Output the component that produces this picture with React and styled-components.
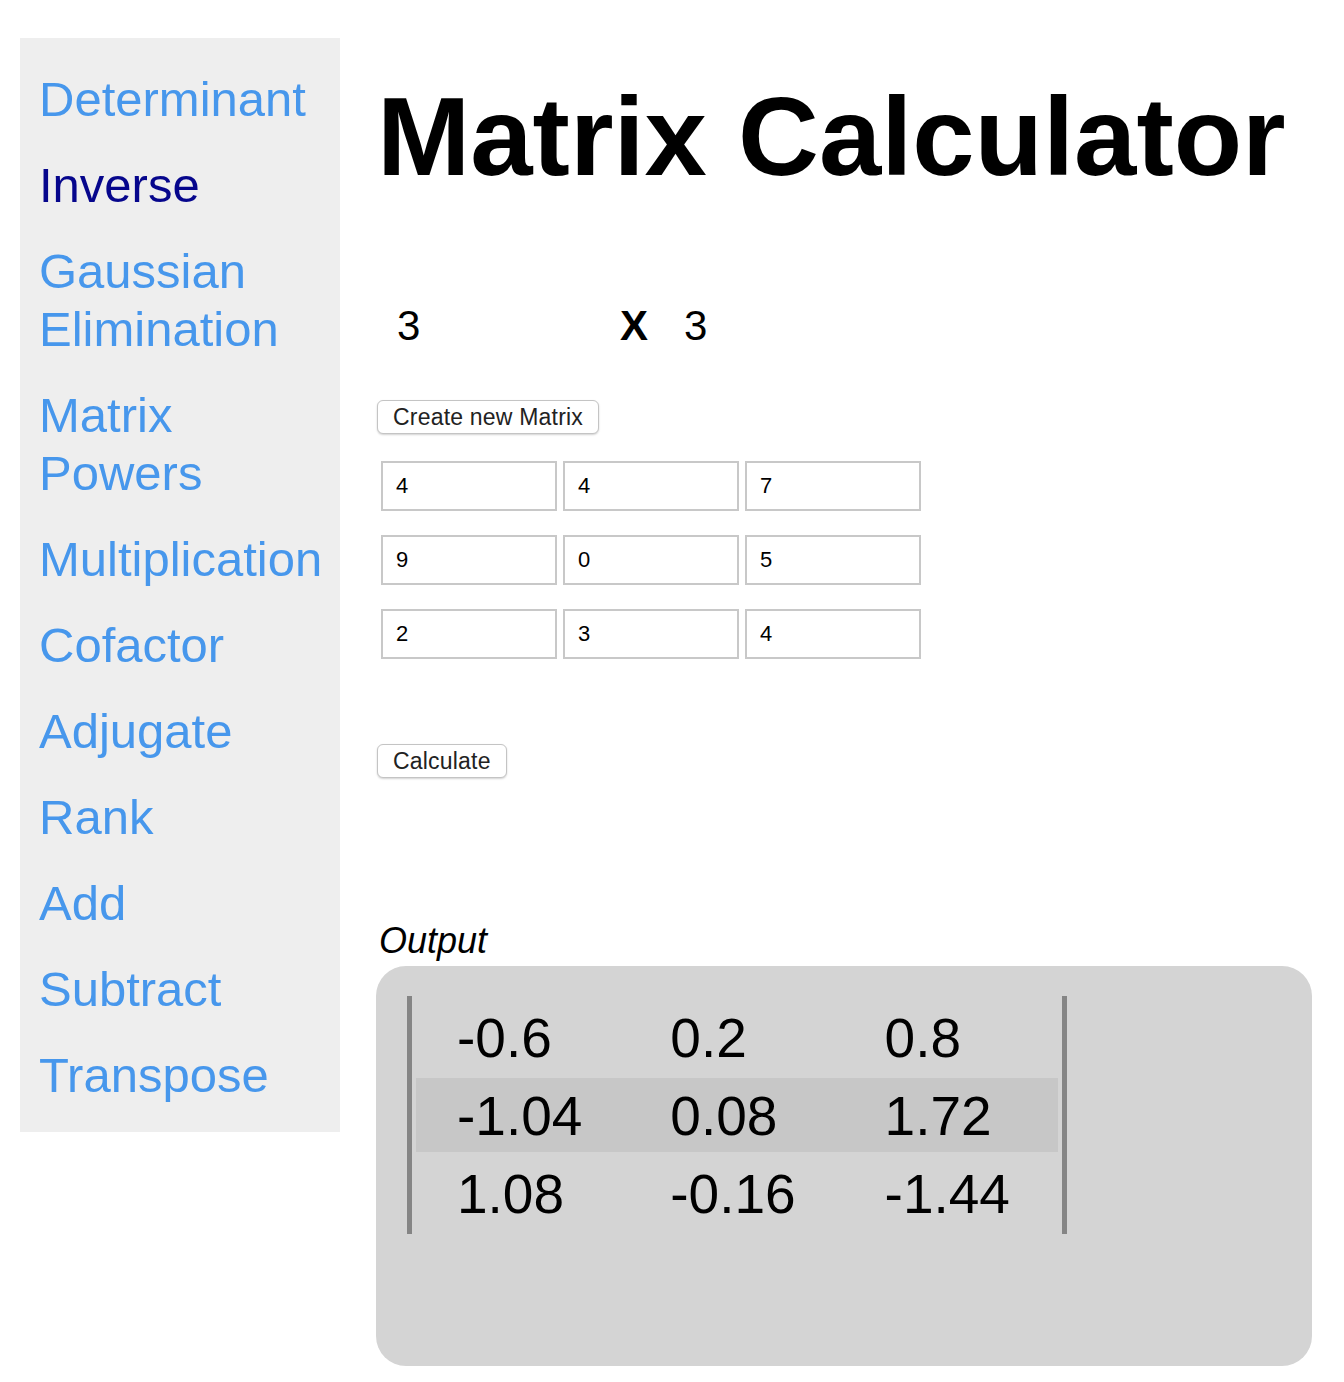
import * as React from 'react';
import styled, { createGlobalStyle } from 'styled-components';

const GlobalStyle = createGlobalStyle`
  body {
    margin: 0;
    background: #fff;
    font-family: "Liberation Sans", Arial, Helvetica, sans-serif;
  }
`;

const Page = styled.div`
  display: flex;
  align-items: flex-start;
  padding: 38px 32px 16px 20px;
`;

const Sidebar = styled.nav`
  width: 320px;
  flex-shrink: 0;
  box-sizing: border-box;
  background: #eeeeee;
  padding: 32px 20px 0 19px;
`;

const NavItem = styled.a`
  display: block;
  font-size: 49px;
  line-height: 58px;
  margin-bottom: 28px;
  color: ${(p) => (p.$visited ? '#06068c' : '#4797ec')};
  text-decoration: none;
  white-space: ${(p) => (p.$nowrap ? 'nowrap' : 'normal')};
`;

const Main = styled.main`
  flex: 1;
  margin-left: 37px;
  display: flex;
  flex-direction: column;
  align-items: flex-start;
`;

const Title = styled.h1`
  margin: 35px 0 0;
  font-size: 112px;
  line-height: 128px;
  font-weight: 700;
  color: #000;
  white-space: nowrap;
`;

const DimRow = styled.div`
  display: flex;
  align-items: center;
  height: 50px;
  margin-top: 100px;
`;

const DimInput = styled.input`
  box-sizing: border-box;
  width: ${(p) => p.$w}px;
  height: 50px;
  padding: 0 0 0 ${(p) => p.$pad}px;
  border: none;
  background: transparent;
  font-family: inherit;
  font-size: 42px;
  color: #000;
  outline: none;
`;

const Times = styled.span`
  margin-left: 21px;
  font-size: 42px;
  font-weight: 700;
  line-height: 50px;
`;

const Button = styled.button`
  box-sizing: border-box;
  height: 34px;
  margin-top: ${(p) => p.$top}px;
  padding: 1px 15px 0;
  border: 1px solid #c4c4c4;
  border-radius: 6px;
  background: #fff;
  box-shadow: 0 1px 2px rgba(0, 0, 0, 0.18);
  font-family: inherit;
  font-size: 23px;
  letter-spacing: 0.2px;
  color: #222;
`;

const MatrixGrid = styled.div`
  display: grid;
  grid-template-columns: repeat(3, 176px);
  column-gap: 6px;
  row-gap: 24px;
  margin: 27px 0 0 4px;
`;

const Cell = styled.input`
  box-sizing: border-box;
  width: 176px;
  height: 50px;
  padding: 0 0 0 13px;
  border: 2px solid #c8c8c8;
  background: #fff;
  font-family: inherit;
  font-size: 22px;
  color: #000;
  outline: none;
`;

const OutputLabel = styled.div`
  margin: 142px 0 0 2px;
  font-size: 36px;
  line-height: 42px;
  font-style: italic;
  color: #000;
`;

const OutputBox = styled.div`
  box-sizing: border-box;
  width: 936px;
  height: 400px;
  margin: 4px 0 0 -1px;
  padding: 30px 0 0 31px;
  background: #d4d4d4;
  border-radius: 30px;
`;

const Bracket = styled.div`
  width: fit-content;
  display: flex;
  flex-direction: column;
  gap: 4px;
  padding: 4px;
  border-left: 5px solid #858585;
  border-right: 5px solid #858585;
`;

const ResultRow = styled.div`
  display: grid;
  grid-template-columns: repeat(3, 211.3px);
  column-gap: 4px;
  height: 74px;
  background: ${(p) => (p.$shade ? '#c7c7c7' : 'transparent')};
`;

const ResultCell = styled.div`
  padding-left: ${(p) => p.$pad}px;
  font-size: 55px;
  line-height: 76px;
  color: #000;
  white-space: nowrap;
`;

const links = [
  'Determinant',
  'Inverse',
  'Gaussian Elimination',
  'Matrix Powers',
  'Multiplication',
  'Cofactor',
  'Adjugate',
  'Rank',
  'Add',
  'Subtract',
  'Transpose',
];

const input = [
  ['4', '4', '7'],
  ['9', '0', '5'],
  ['2', '3', '4'],
];

const result = [
  ['-0.6', '0.2', '0.8'],
  ['-1.04', '0.08', '1.72'],
  ['1.08', '-0.16', '-1.44'],
];

const pads = [41, 39, 38];

export default function App() {
  return (
    <>
      <GlobalStyle />
      <Page>
        <Sidebar>
          {links.map((l) => (
            <NavItem
              key={l}
              href="#"
              $visited={l === 'Inverse'}
              $nowrap={!l.includes(' ')}
            >
              {l}
            </NavItem>
          ))}
        </Sidebar>
        <Main>
          <Title>Matrix Calculator</Title>
          <DimRow>
            <DimInput defaultValue="3" $w={222} $pad={20} />
            <Times>X</Times>
            <DimInput defaultValue="3" $w={120} $pad={36} />
          </DimRow>
          <Button $top={49}>Create new Matrix</Button>
          <MatrixGrid>
            {input.flat().map((v, i) => (
              <Cell key={i} defaultValue={v} />
            ))}
          </MatrixGrid>
          <Button $top={85}>Calculate</Button>
          <OutputLabel>Output</OutputLabel>
          <OutputBox>
            <Bracket>
              {result.map((row, r) => (
                <ResultRow key={r} $shade={r === 1}>
                  {row.map((v, c) => (
                    <ResultCell key={c} $pad={pads[c]}>
                      {v}
                    </ResultCell>
                  ))}
                </ResultRow>
              ))}
            </Bracket>
          </OutputBox>
        </Main>
      </Page>
    </>
  );
}
